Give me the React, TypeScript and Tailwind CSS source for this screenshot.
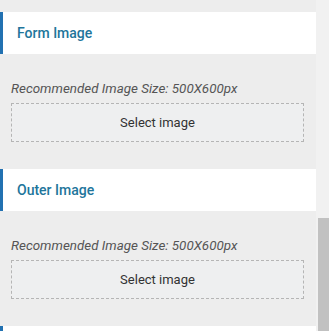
import React from "react"

const sections = ["Form Image", "Outer Image"]

function Section({ title }: { title: string }) {
    return (
        <div>
            <div className="flex h-[42px] items-center bg-white">
                <div className="h-full w-[3px] bg-[#2271b1]" />
                <h3 className="pl-[14px] text-[14px] font-medium text-[#21759b]">{title}</h3>
            </div>
            <div className="pl-[11px] pr-[12px] pt-[27px] pb-[27px]">
                <p className="text-[13.4px] leading-4 italic text-[#555]">
                    Recommended Image Size: 500X600px
                </p>
                <button
                    type="button"
                    className="mt-[6px] flex h-[39px] w-full items-center justify-center border border-dashed border-[#b5b5b5] bg-[#eeeff0] text-[13px] text-[#333]"
                >
                    Select image
                </button>
            </div>
        </div>
    )
}

export default function App() {
    return (
        <div className="flex h-[331px] w-[329px] overflow-hidden bg-[#ededed] font-['Roboto',sans-serif]">
            <div className="w-[316px] pt-[12px]">
                {sections.map((s) => (
                    <Section key={s} title={s} />
                ))}
                <div className="flex h-[42px] bg-white">
                    <div className="h-full w-[3px] bg-[#2271b1]" />
                </div>
            </div>
            <div className="flex w-[13px] bg-[#f1f1f1] pt-[218px] pl-[2px]">
                <div className="h-full w-full bg-[#c1c1c1]" />
            </div>
        </div>
    )
}
